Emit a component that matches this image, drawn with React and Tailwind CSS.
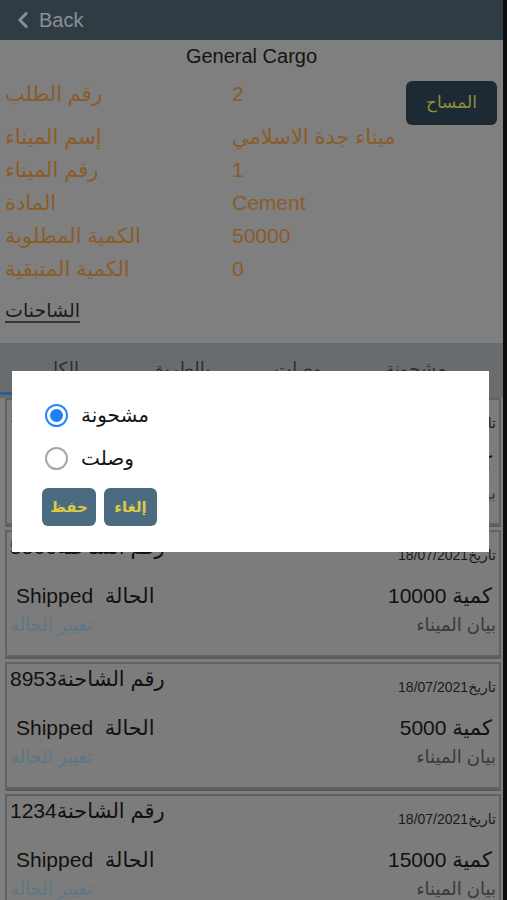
import React from "react";
import { ChevronLeft } from "lucide-react";

const infoRows = [
  ["رقم الطلب", "2"],
  ["إسم الميناء", "ميناء جدة الاسلامي"],
  ["رقم الميناء", "1"],
  ["المادة", "Cement"],
  ["الكمية المطلوبة", "50000"],
  ["الكمية المتبقية", "0"],
];

const cards = [
  { no: "1122", qty: "20000" },
  { no: "5566", qty: "10000" },
  { no: "8953", qty: "5000" },
  { no: "1234", qty: "15000" },
];

function Card({ no, qty }) {
  return (
    <div className="h-[127px] shrink-0 border-2 border-[#626262] bg-[#7c7c7c] shadow-[0_2px_0_#5c5c5c] px-[3px] pt-[2px]">
      <div className="flex items-start justify-between">
        <span dir="rtl" className="text-[21px] leading-[26px] text-[#111]">
          رقم الشاحنة{no}
        </span>
        <span dir="rtl" className="mt-[13px] text-[14px] leading-[16px] text-[#1a1a1a]">
          تاريخ18/07/2021
        </span>
      </div>
      <div className="mt-[19px] flex items-center justify-between pl-[6px] pr-[4px]">
        <span dir="rtl" className="text-[21px] leading-[28px] text-[#111]">
          الحالة&nbsp;&nbsp;Shipped
        </span>
        <span dir="rtl" className="text-[21px] leading-[28px] text-[#111]">
          كمية {qty}
        </span>
      </div>
      <div className="mt-[3px] flex items-center justify-between">
        <span className="text-[18px] leading-[24px] text-[#5b7785]">تغيير الحالة</span>
        <span className="text-[18px] leading-[24px] text-[#3a3a3a]">بيان الميناء</span>
      </div>
    </div>
  );
}

function Radio({ checked, label }) {
  return (
    <div className="flex h-[22px] items-center gap-[13px]">
      <span
        className={
          checked
            ? "flex h-[23px] w-[23px] items-center justify-center rounded-full border-2 border-[#2a86f5]"
            : "flex h-[23px] w-[23px] items-center justify-center rounded-full border-2 border-[#a6a6a6]"
        }
      >
        {checked ? <span className="h-[13px] w-[13px] rounded-full bg-[#1f7ff2]" /> : null}
      </span>
      <span className="text-[20px] leading-[24px] text-[#151515]">{label}</span>
    </div>
  );
}

export default function App() {
  return (
    <div className="flex h-[900px] w-[507px] overflow-hidden bg-[#0e0e0e] font-['Liberation_Sans','DejaVu_Sans',sans-serif]">
      <div className="relative flex w-[503px] flex-col bg-[#7f7f7f]">
        {/* header */}
        <div className="flex h-[40px] shrink-0 items-center bg-[#303c44] pl-[10px]">
          <ChevronLeft size={26} strokeWidth={2.6} color="#8a9096" />
          <span className="ml-[3px] text-[20px] text-[#8a9096]">Back</span>
        </div>

        {/* title */}
        <div className="flex h-[37px] shrink-0 items-center justify-center pb-[6px] text-[20px] text-[#141414]">
          General Cargo
        </div>

        {/* info */}
        <div className="flex shrink-0">
          <div className="flex flex-1 flex-col pl-[5px]">
            {infoRows.map(([l, v], i) => (
              <div
                key={i}
                className={
                  i === 0
                    ? "mb-[10px] flex h-[33px] items-center text-[21px] text-[#8a5c2a]"
                    : "flex h-[33px] items-center text-[21px] text-[#8a5c2a]"
                }
              >
                <span className="w-[227px]">{l}</span>
                <span>{v}</span>
              </div>
            ))}
          </div>
          <div className="pr-[6px] pt-[4px]">
            <button className="flex h-[44px] w-[91px] items-center justify-center rounded-[6px] bg-[#1e2a33] text-[17px] text-[#8f8f3a]">
              المساح
            </button>
          </div>
        </div>

        <div className="mt-[14px] pl-[5px] leading-[24px]">
          <span className="border-b-2 border-[#333] text-[19px] text-[#1c1c1c]">الشاحنات</span>
        </div>

        {/* tabs */}
        <div className="mt-[19px] flex h-[55px] shrink-0 bg-[#696c6f] pl-[3px]">
          {["الكل", "بالطريق", "وصلت", "مشحونة"].map((t, i) => (
            <div key={i} className="flex w-[118px] flex-col items-center">
              <span className="pt-[14px] text-[18px] leading-[24px] text-[#2e2e2e]">{t}</span>
              {i === 0 ? <span className="mt-[11px] h-[3px] w-[124px] -ml-[6px] bg-[#2d5f8e]" /> : null}
            </div>
          ))}
        </div>

        {/* cards */}
        <div className="flex flex-col gap-[5px] pl-[5px] pr-[2px]">
          {cards.map((c, i) => (
            <Card key={i} {...c} />
          ))}
        </div>

        {/* dialog */}
        <div className="absolute left-[12px] top-[371px] h-[181px] w-[477px] bg-white pl-[33px] pt-[33px]">
          <div className="flex flex-col gap-[21px]">
            <Radio checked label="مشحونة" />
            <Radio label="وصلت" />
          </div>
          <div className="mt-[19px] flex gap-[8px] -ml-[3px]">
            <button className="flex h-[38px] w-[54px] items-center justify-center rounded-[6px] bg-[#4b6b81] text-[15px] font-bold text-[#dccb45]">
              حفظ
            </button>
            <button className="flex h-[38px] w-[53px] items-center justify-center rounded-[6px] bg-[#4b6b81] text-[15px] font-bold text-[#dccb45]">
              إلغاء
            </button>
          </div>
        </div>
      </div>
    </div>
  );
}
